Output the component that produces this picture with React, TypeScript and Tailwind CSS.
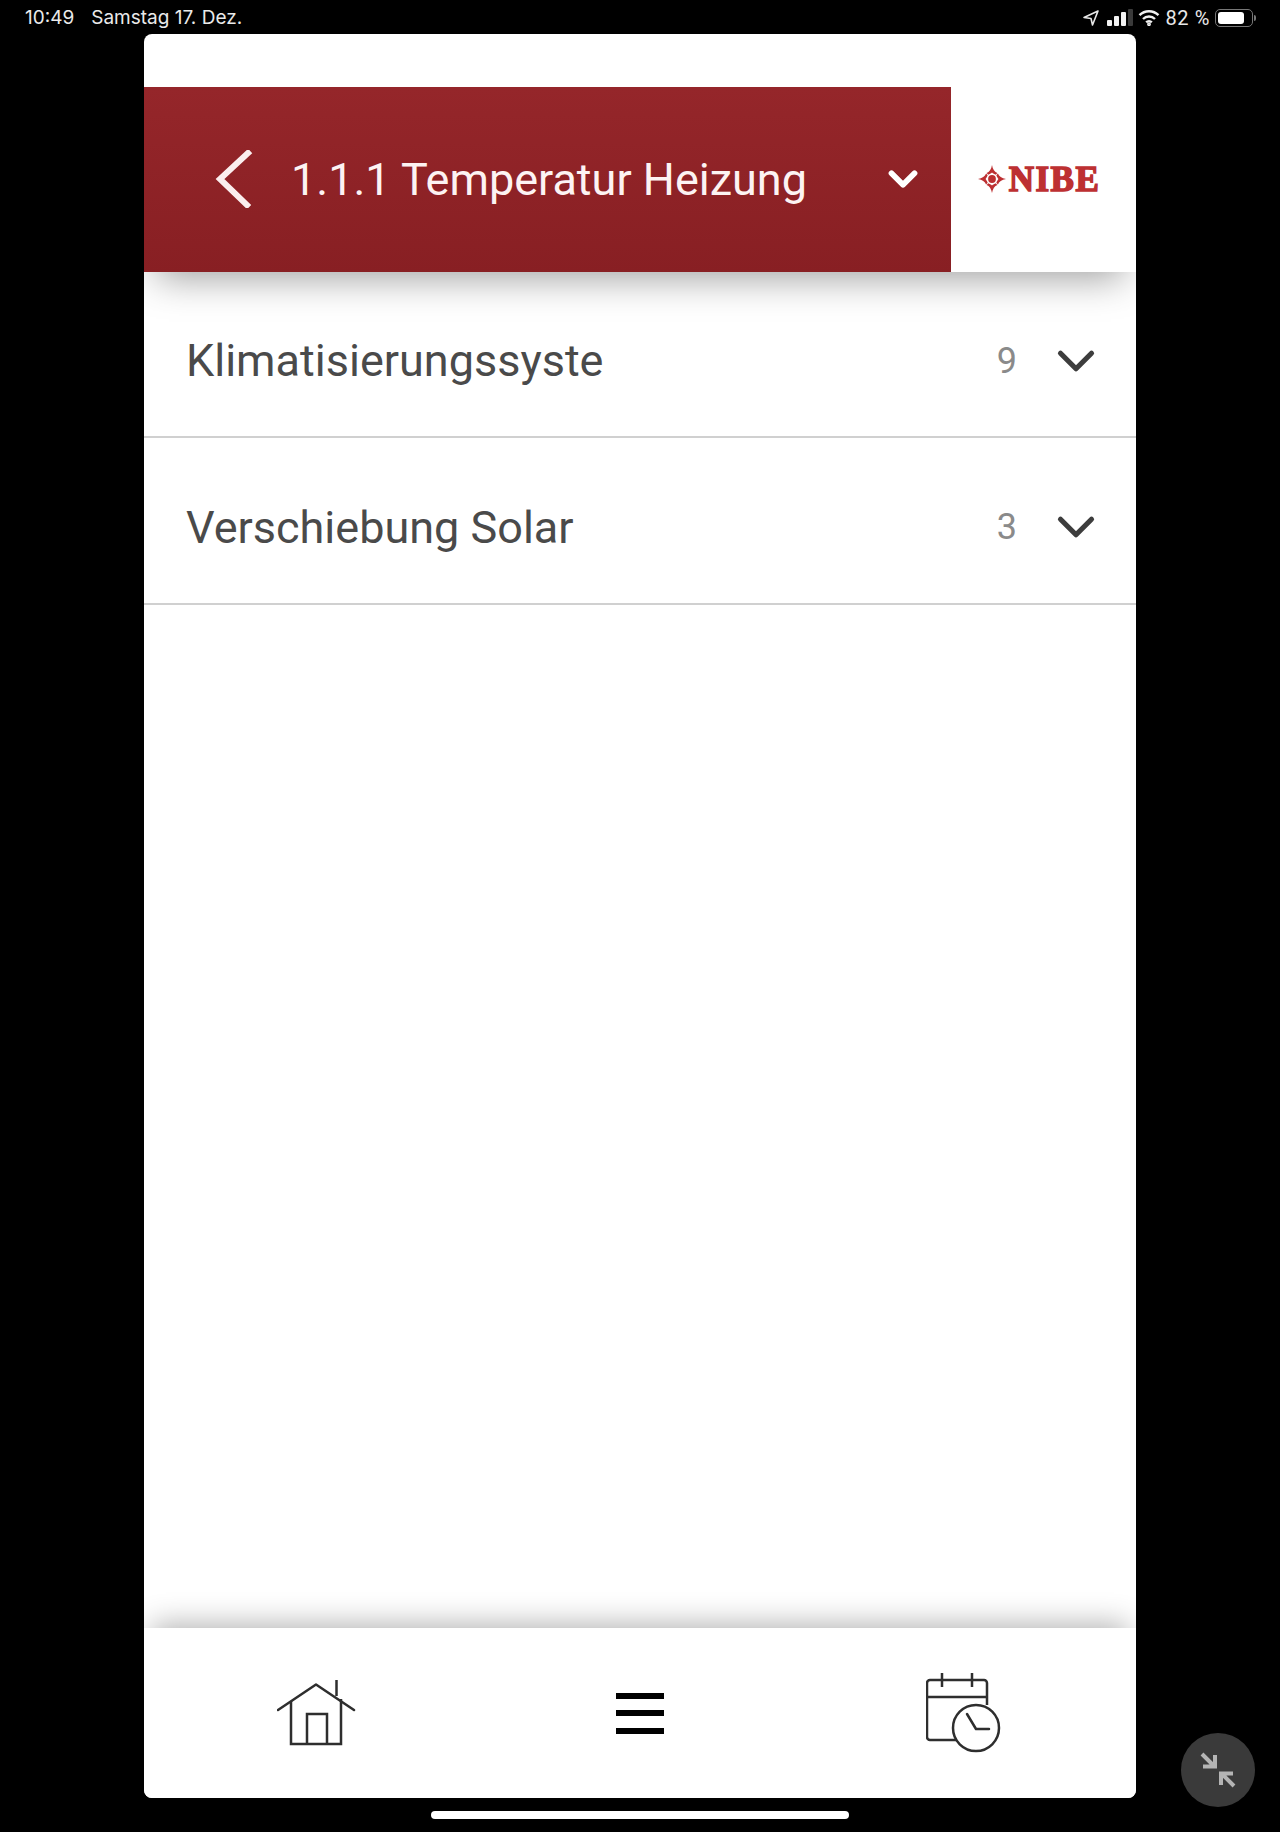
import { ChevronDown } from 'lucide-react';

const ROWS = [
  { label: 'Klimatisierungssyste', count: 9 },
  { label: 'Verschiebung Solar', count: 3 },
];

function StatusIcons() {
  return (
    <div className="flex items-center text-[19px] text-[#e8e8e8]">
      <svg width="18" height="18" viewBox="0 0 18 18" fill="none" stroke="#e8e8e8" strokeWidth="1.6" strokeLinejoin="round">
        <path d="M16 2 2 8.5l7 1 1.5 6.5z" />
      </svg>
      <svg className="ml-[7px]" width="26" height="17" viewBox="0 0 26 17" fill="#f2f2f2">
        <rect x="0" y="11" width="5" height="6" rx="1" />
        <rect x="7" y="7" width="5" height="10" rx="1" />
        <rect x="14" y="3" width="5" height="14" rx="1" />
        <rect x="21" y="0" width="5" height="17" rx="1" fill="#3a3a3a" />
      </svg>
      <svg className="ml-[5px]" width="22" height="17" viewBox="0 0 22 17" fill="none" stroke="#f2f2f2" strokeWidth="2.4">
        <path d="M1.5 6.2a13.5 13.5 0 0 1 19 0" />
        <path d="M5 10a8.5 8.5 0 0 1 12 0" />
        <path d="M8.2 13.4a3.8 3.8 0 0 1 5.6 0" />
        <circle cx="11" cy="15.2" r="0.7" fill="#f2f2f2" />
      </svg>
      <span className="ml-[6px] font-['Roboto',sans-serif] text-[20px] tracking-[0.6px]">82 %</span>
      <div className="ml-[5px] flex h-[18px] w-[38px] items-center rounded-[5px] border border-[#777] p-[2px]">
        <div className="h-full w-[82%] rounded-[3px] bg-white" />
      </div>
      <div className="ml-[1px] h-[6px] w-[2px] rounded-r-sm bg-[#777]" />
    </div>
  );
}

function HouseIcon() {
  return (
    <svg width="80" height="68" viewBox="0 0 80 68" fill="none" stroke="#2e2e2e" strokeWidth="2.5">
      <path d="M1 31 39 5.5 77 31" strokeLinecap="round" strokeLinejoin="round" />
      <path d="M14 22v43h50V20" />
      <path d="M30 65V35h20v30" />
      <path d="M59.500 1v16" />
    </svg>
  );
}

function CalendarClockIcon() {
  return (
    <svg width="76" height="80" viewBox="0 0 76 80" fill="none" stroke="#2e2e2e" strokeWidth="2.5">
      <path d="M31 67H4a3 3 0 0 1-3-3V10a3 3 0 0 1 3-3h54a3 3 0 0 1 3 3v22" />
      <path d="M1 24h60" />
      <path d="M16 0v14M46 0v14" />
      <circle cx="50" cy="55" r="23" />
      <path d="M41 41l9 15h13" strokeLinecap="round" strokeLinejoin="round" />
    </svg>
  );
}

function NibeLogo() {
  return (
    <div className="flex items-center text-[#bd3032]">
      <svg width="28" height="28" viewBox="0 0 26 26" fill="#bd3032">
        <circle cx="13" cy="13" r="3.6" />
        <path d="M13 0c.6 4 2.500 6.500 5 7.500l-1.500 1.500C14.500 8 13.500 7.500 13 7c-.5.5-1.500 1-3.500 2L8 7.500C10.500 6.500 12.400 4 13 0Z" />
        <path d="M13 26c.6-4 2.500-6.500 5-7.500L16.500 17c-2 1-3 1.500-3.500 2-.5-.5-1.500-1-3.500-2L8 18.500c2.500 1 4.400 3.500 5 7.500Z" />
        <path d="M0 13c4-.6 6.500-2.500 7.500-5L9 9.500C8 11.500 7.500 12.500 7 13c.5.500 1 1.500 2 3.500L7.500 18c-1-2.500-3.500-4.400-7.500-5Z" />
        <path d="M26 13c-4-.6-6.500-2.500-7.500-5L17 9.500c1 2 1.500 3 2 3.500-.5.500-1 1.500-2 3.500l1.500 1.500c1-2.500 3.500-4.400 7.500-5Z" />
      </svg>
      <span className="ml-[3px] font-['Liberation_Serif',serif] text-[35px] leading-none font-bold tracking-[1.5px] [-webkit-text-stroke:1.5px_#bd3032]">
        NIBE
      </span>
    </div>
  );
}

export default function App() {
  return (
    <div className="relative flex h-[1832px] w-[1280px] flex-col overflow-hidden bg-black font-['Roboto',sans-serif]">
      {/* status bar */}
      <div className="flex h-[33.5px] shrink-0 items-center justify-between pt-[2px] pr-[24px] pl-[25px] font-['Inter',sans-serif] text-[19px] text-[#eaeaea]">
        <div className="flex gap-[17px]">
          <span>10:49</span>
          <span>Samstag 17. Dez.</span>
        </div>
        <StatusIcons />
      </div>

      {/* app card */}
      <div className="mx-[144px] flex h-[1764.5px] flex-col overflow-hidden rounded-[8px] bg-white">
        <div className="relative z-10 shrink-0 pt-[53px] shadow-[0_18px_36px_-12px_rgba(0,0,0,0.38)]">
          <div className="flex h-[185px] bg-white">
            <div className="flex w-[807px] items-center bg-gradient-to-b from-[#95262a] to-[#881f23]">
              <svg className="ml-[71px]" width="38" height="58" viewBox="0 0 38 58" fill="none" stroke="#fbeeee" strokeWidth="6" strokeLinecap="square">
                <path d="M33 3 5 29l27 26" />
              </svg>
              <span className="ml-[38px] text-[45px] leading-none text-[#fdf3f3]">1.1.1 Temperatur Heizung</span>
              <ChevronDown className="ml-auto mr-[25px]" size={46} strokeWidth={3} color="#fff" />
            </div>
            <div className="flex flex-1 items-center justify-center pr-[9px]">
              <NibeLogo />
            </div>
          </div>
        </div>

        <div className="flex-1">
          {ROWS.map((row) => (
            <div key={row.label} className="flex h-[166.500px] items-center border-b-2 border-[#d0d0d0] pt-[14px] pr-[29px] pl-[42px]">
              <span className="text-[45px] leading-none text-[#4a4a4a]">{row.label}</span>
              <span className="ml-auto text-[36px] leading-none text-[#8a8a8a]">{row.count}</span>
              <ChevronDown className="ml-[28px]" size={62} strokeWidth={2} color="#3d3d3d" />
            </div>
          ))}
        </div>

        <div className="relative z-10 flex h-[170px] shrink-0 items-center bg-white shadow-[0_-12px_28px_-8px_rgba(0,0,0,0.3)]">
          <div className="ml-[133px]">
            <HouseIcon />
          </div>
          <div className="ml-[259px] flex flex-col gap-[11.5px]">
            <div className="h-[6px] w-[48px] bg-black" />
            <div className="h-[6px] w-[48px] bg-black" />
            <div className="h-[6px] w-[48px] bg-black" />
          </div>
          <div className="ml-[262px]">
            <CalendarClockIcon />
          </div>
        </div>
      </div>

      {/* home indicator */}
      <div className="mx-auto mt-[13px] h-[8px] w-[418px] rounded-full bg-white" />

      {/* floating minimise button */}
      <div className="absolute top-[1733px] left-[1181px] flex h-[74px] w-[74px] items-center justify-center rounded-full bg-[#3a3a3a]">
        <svg width="36" height="36" viewBox="0 0 36 36" fill="none" stroke="#b4b4b4" strokeWidth="4">
          <path d="M2 2l13 13M3 14.500h12V3" />
          <path d="M34 34 21 21M33 21.500H21V33" />
        </svg>
      </div>
    </div>
  );
}
